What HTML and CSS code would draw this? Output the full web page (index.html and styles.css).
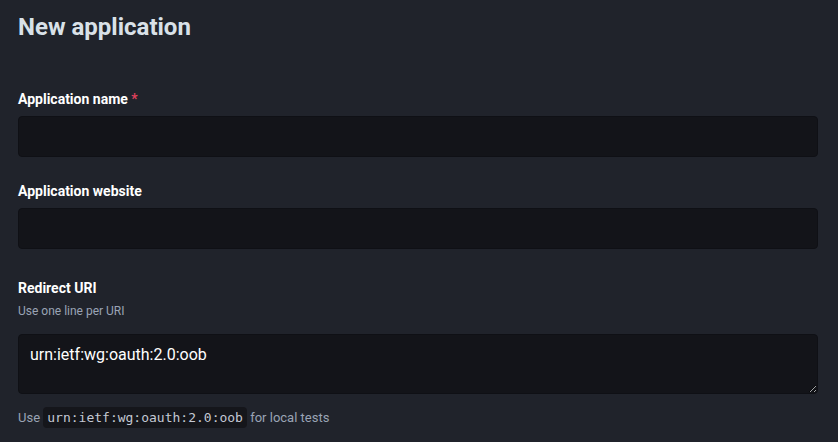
FILE: index.html
```html
<!DOCTYPE html>
<html>
<head>
<meta charset="utf-8">
<link rel="stylesheet" href="styles.css">
</head>
<body>
<div class="page">
  <h1 class="title">New application</h1>
  <form class="form">
    <div class="field">
      <label class="label">Application name <abbr class="req">*</abbr></label>
      <input class="input" type="text">
    </div>
    <div class="field">
      <label class="label">Application website</label>
      <input class="input" type="text">
    </div>
    <div class="field third">
      <label class="label">Redirect URI</label>
      <span class="hint top">Use one line per URI</span>
      <textarea class="textarea">urn:ietf:wg:oauth:2.0:oob</textarea>
      <span class="hint bottom">Use <code class="code">urn:ietf:wg:oauth:2.0:oob</code> for local tests</span>
    </div>
  </form>
</div>
</body>
</html>
```
FILE: styles.css
```css
html, body { margin: 0; padding: 0; }
body {
  background: #20232b;
  font-family: Roboto, "Liberation Sans", sans-serif;
  color: #fff;
  width: 838px;
  height: 442px;
  overflow: hidden;
}
.page { padding: 0 20px 0 18px; }
.title {
  margin: 0;
  padding-top: 12px;
  font-size: 24px;
  line-height: 30px;
  font-weight: 700;
  color: #d9e1e8;
}
.form { display: flex; flex-direction: column; gap: 25px; padding-top: 48px; }
.field { display: flex; flex-direction: column; }
.field.third { margin-top: 5px; }
.label {
  font-size: 14px;
  font-weight: 700;
  line-height: 18px;
  color: #fff;
  margin-bottom: 8px;
}
.req { color: #df405a; text-decoration: none; border: none; }
.input, .textarea {
  box-sizing: border-box;
  width: 800px;
  background: #131419;
  border: 1px solid #0f1015;
  border-radius: 4px;
  color: #fff;
  font-family: Roboto, "Liberation Sans", sans-serif;
  font-size: 16px;
  outline: none;
}
.input { height: 41px; padding: 0 12px; }
.textarea {
  height: 60px;
  padding: 10px 11px;
  resize: vertical;
  line-height: 20px;
  margin-top: 15px;
}
.hint {
  color: #9aa3b5;
  font-size: 12px;
  line-height: 16px;
}
.hint.top { margin-top: -2px; }
.hint.bottom { font-size: 13px; line-height: 20px; margin-top: 14px; }
.code {
  font-family: "DejaVu Sans Mono", "Liberation Mono", monospace;
  font-size: 13px;
  background: #15161b;
  color: #c4c9d4;
  padding: 3px 4px;
  border-radius: 4px;
}
```
